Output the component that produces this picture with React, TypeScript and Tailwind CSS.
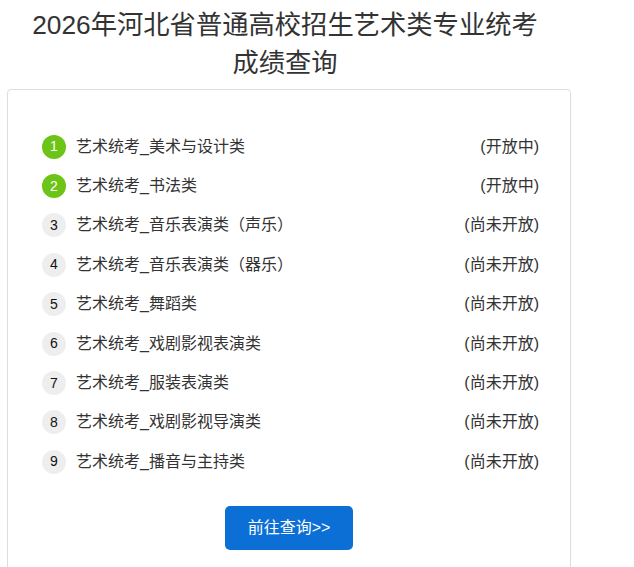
import React from 'react'

const items = [
  { name: '艺术统考_美术与设计类', open: true },
  { name: '艺术统考_书法类', open: true },
  { name: '艺术统考_音乐表演类（声乐）', open: false },
  { name: '艺术统考_音乐表演类（器乐）', open: false },
  { name: '艺术统考_舞蹈类', open: false },
  { name: '艺术统考_戏剧影视表演类', open: false },
  { name: '艺术统考_服装表演类', open: false },
  { name: '艺术统考_戏剧影视导演类', open: false },
  { name: '艺术统考_播音与主持类', open: false },
]

const App: React.FC = () => {
  return (
    <div
      className="w-[634px] h-[567px] overflow-hidden bg-white text-[#333]"
      style={{ fontFamily: '"Liberation Sans", "Noto Sans CJK SC", sans-serif' }}
    >
      <div className="w-[578px]">
        <h1 className="pt-[6px] pr-[8px] text-center text-[26.3px] leading-[38px] font-normal text-[#333]">
          2026年河北省普通高校招生艺术类专业统考
          <br />
          成绩查询
        </h1>

        <div className="mx-[7px] mt-[7px] h-[600px] border border-[#ddd] rounded-[4px] pt-[37px] pl-[34px] pr-[31px]">
          <ul>
            {items.map((it, i) => (
              <li key={i} className="flex items-center h-[39.4px] text-[16px]">
                <span
                  className={
                    it.open
                      ? 'w-6 h-6 rounded-full bg-[#6cc417] text-white text-[14px] flex items-center justify-center'
                      : 'w-6 h-6 rounded-full bg-[#eeeeee] text-[#111] text-[14px] flex items-center justify-center'
                  }
                >
                  {i + 1}
                </span>
                <span className="ml-[10px] text-[#333]">{it.name}</span>
                <span className="ml-auto text-[#333]">{it.open ? '(开放中)' : '(尚未开放)'}</span>
              </li>
            ))}
          </ul>

          <div className="flex justify-center mt-[24px] pr-[3px]">
            <button className="w-[128px] h-[44px] rounded-[5px] bg-[#0b6fd6] text-white text-[16px]">
              前往查询&gt;&gt;
            </button>
          </div>
        </div>
      </div>
    </div>
  )
}

export default App
